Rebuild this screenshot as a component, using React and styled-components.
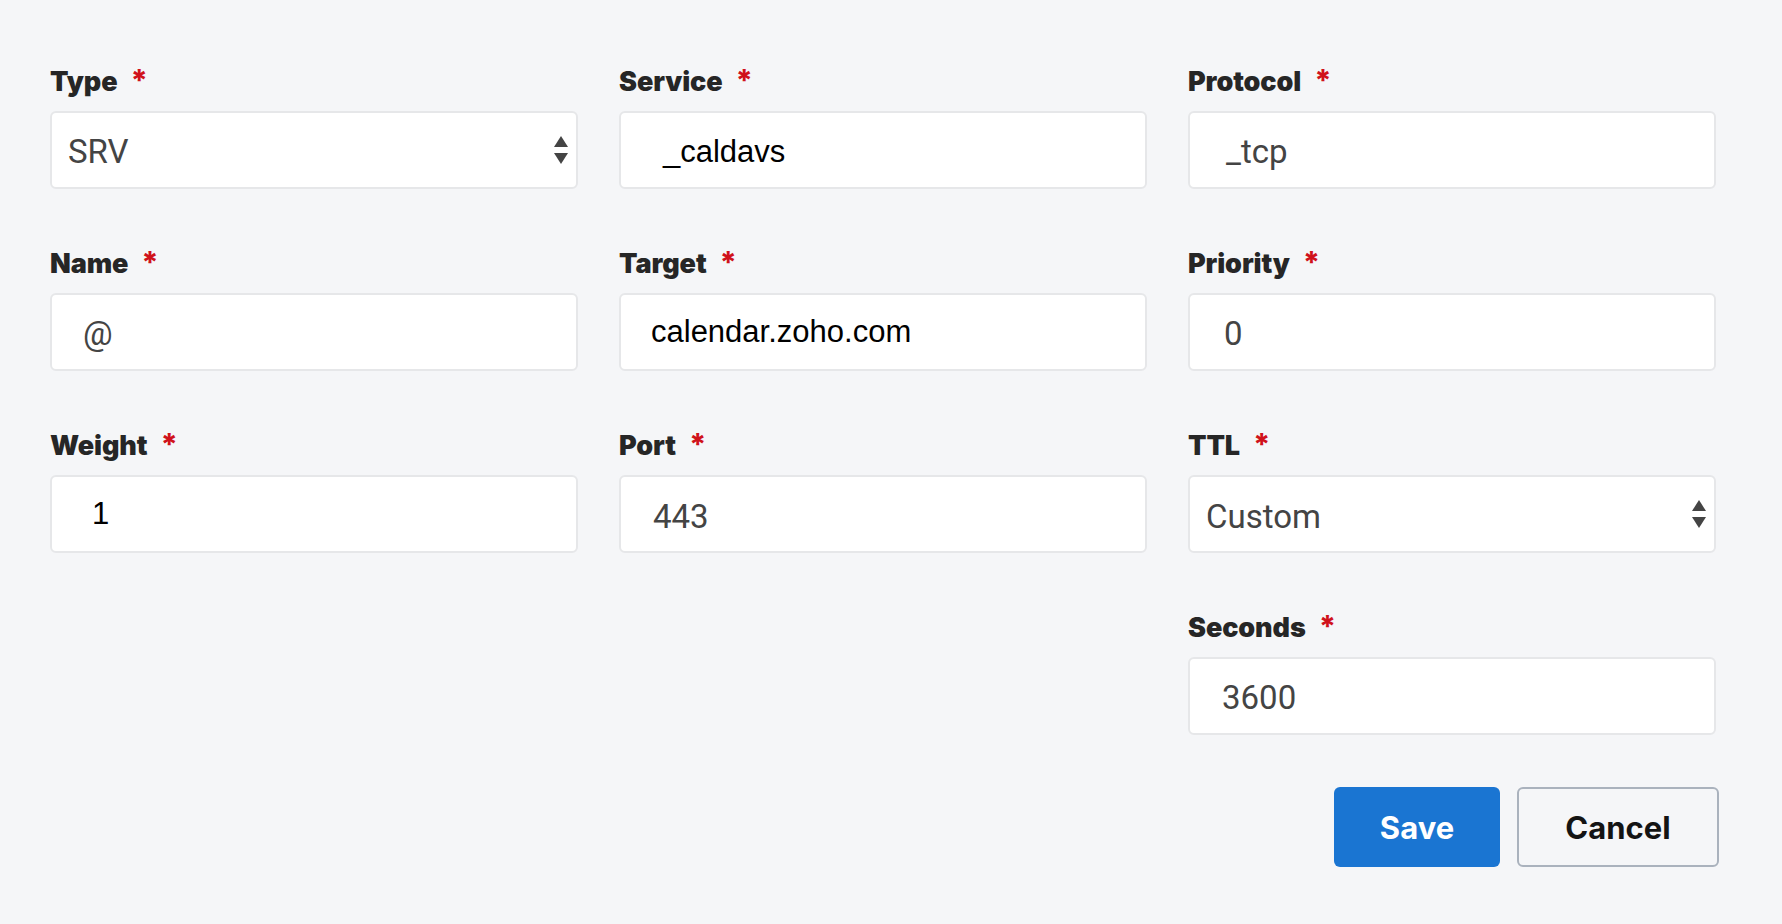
import React from "react";
import styled, { createGlobalStyle } from "styled-components";

const GlobalStyle = createGlobalStyle`
  html, body {
    margin: 0;
    padding: 0;
    background: #f5f6f8;
  }
  body {
    font-family: "Inter", "Liberation Sans", sans-serif;
  }
`;

const Page = styled.div`
  min-height: 924px;
  box-sizing: border-box;
  padding: 64px 66px 0 50px;
  background: #f5f6f8;
`;

const Grid = styled.div`
  display: grid;
  grid-template-columns: repeat(3, 1fr);
  column-gap: 41px;
  row-gap: 57px;
`;

const Field = styled.div`
  display: flex;
  flex-direction: column;
  gap: 15px;
  grid-column: ${(p) => p.$col || "auto"};
`;

const Label = styled.label`
  display: flex;
  align-items: baseline;
  gap: 13px;
  height: 32px;
  font-family: "Inter", sans-serif;
  font-weight: 900;
  font-size: 27px;
  line-height: 32px;
  color: #262626;
  letter-spacing: -0.1px;
`;

const Star = styled.span`
  color: #d0121b;
  font-weight: 800;
  font-size: 30px;
  line-height: 32px;
`;

const Control = styled.div`
  position: relative;
  box-sizing: border-box;
  height: 78px;
  display: flex;
  align-items: center;
  padding-left: ${(p) => p.$indent}px;
  padding-top: ${(p) => p.$shift || 0}px;
  background: #ffffff;
  border: 2px solid #e6e7e9;
  border-radius: 6px;
`;

const Value = styled.span`
  font-family: ${(p) =>
    p.$pasted ? '"Liberation Sans", Arial, sans-serif' : '"Roboto", sans-serif'};
  font-size: ${(p) => (p.$pasted ? "31px" : "33px")};
  color: ${(p) => (p.$pasted ? "#000000" : "#444444")};
  text-shadow: ${(p) => (p.$pasted ? "0 0 2px #ffffff" : "none")};
  white-space: pre;
`;

const Arrows = styled.span`
  position: absolute;
  right: 8px;
  top: 50%;
  transform: translateY(-50%);
  display: flex;
  flex-direction: column;
  gap: 6px;
`;

const Actions = styled.div`
  display: flex;
  justify-content: flex-end;
  gap: 17px;
  margin-top: 52px;
  margin-right: -3px;
`;

const Button = styled.button`
  box-sizing: border-box;
  height: 80px;
  width: ${(p) => p.$w}px;
  border-radius: 6px;
  font-family: "Inter", sans-serif;
  font-weight: 700;
  font-size: 31px;
  cursor: pointer;
  border: ${(p) => (p.$primary ? "none" : "2px solid #aab2bd")};
  background: ${(p) => (p.$primary ? "#1a75d2" : "#f5f6f8")};
  color: ${(p) => (p.$primary ? "#ffffff" : "#141414")};
`;

const SelectArrows = () => (
  <Arrows>
    <svg width="14" height="11" viewBox="0 0 14 11">
      <path d="M7 0 L14 11 L0 11 Z" fill="#444" />
    </svg>
    <svg width="14" height="11" viewBox="0 0 14 11">
      <path d="M0 0 L14 0 L7 11 Z" fill="#444" />
    </svg>
  </Arrows>
);

const fields = [
  { label: "Type", value: "SRV", select: true, indent: 16, shift: 2 },
  { label: "Service", value: "_caldavs", pasted: true, indent: 42, shift: 4 },
  { label: "Protocol", value: "_tcp", indent: 36, shift: 2 },
  { label: "Name", value: "@", indent: 31, shift: 2 },
  { label: "Target", value: "calendar.zoho.com", pasted: true, indent: 30, shift: 0 },
  { label: "Priority", value: "0", indent: 34, shift: 2 },
  { label: "Weight", value: "1", pasted: true, indent: 40, shift: 0 },
  { label: "Port", value: "443", indent: 32, shift: 4 },
  { label: "TTL", value: "Custom", select: true, indent: 16, shift: 4 },
  { label: "Seconds", value: "3600", indent: 32, shift: 2, col: 3 },
];

export default function App() {
  return (
    <>
      <GlobalStyle />
      <Page>
        <Grid>
          {fields.map((f) => (
            <Field key={f.label} $col={f.col}>
              <Label>
                {f.label}
                <Star>*</Star>
              </Label>
              <Control $indent={f.indent} $shift={f.shift}>
                <Value $pasted={f.pasted}>{f.value}</Value>
                {f.select && <SelectArrows />}
              </Control>
            </Field>
          ))}
        </Grid>
        <Actions>
          <Button $primary $w={166}>Save</Button>
          <Button $w={202}>Cancel</Button>
        </Actions>
      </Page>
    </>
  );
}
